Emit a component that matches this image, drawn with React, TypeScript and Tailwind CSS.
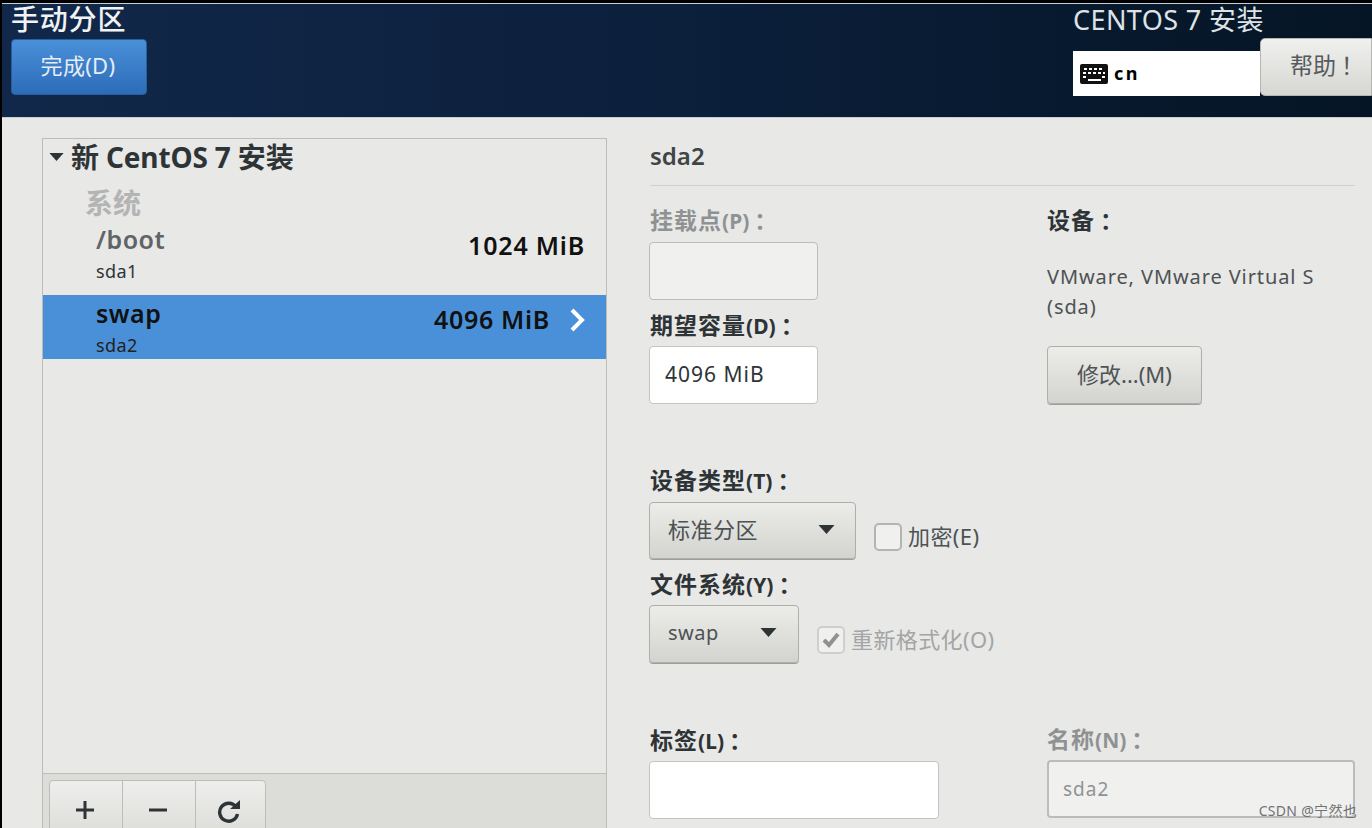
import React from "react";

const font = { fontFamily: '"Noto Sans","Noto Sans CJK SC",sans-serif' };

function Caret({ className }: { className: string }) {
  return (
    <svg viewBox="0 0 16 9" className={className}>
      <path d="M0 0H16L8 9Z" fill="currentColor" />
    </svg>
  );
}

function Label({ text, hot, muted }: { text: string; hot?: string; muted?: boolean }) {
  return (
    <div className={`h-[28px] text-[23px] leading-[28px] font-bold tracking-[1px] whitespace-nowrap ${muted ? "text-[#8f9293]" : "text-[#2e3436]"}`}>
      {text}
      {hot ? <span className="text-[21px] tracking-[0px]">({hot})</span> : null}
      <span className="ml-[5px]">：</span>
    </div>
  );
}

function Combo({ text, width, gap, size }: { text: string; width: string; gap: string; size: string }) {
  return (
    <div className={`${width} ${size} -ml-px shrink-0 rounded-[4px] border border-[#aeaeab] bg-gradient-to-b from-[#ecece9] to-[#d3d3d0] flex items-center pl-[18px] pb-[3px] text-[#4d5254] tracking-[0.5px] shadow-[0_1px_0_#9d9d9a]`}>
      <span className={`${gap} whitespace-nowrap`}>{text}</span>
      <Caret className="w-[17px] h-[9px] text-[#2e3436]" />
    </div>
  );
}

export default function App() {
  return (
    <div style={font} className="w-[1372px] h-[828px] overflow-hidden bg-black pt-[3px] pl-[2px] relative">
      <div className="w-full h-full bg-[#e8e8e7] flex flex-col">
        <div className="border-t border-[#c9ced3] h-[115px] shrink-0 border-b bg-gradient-to-r from-[#11284a] via-[#0c1f3b] to-[#051525] flex justify-between">
          <div className="pl-[9px]">
            <div className="text-[28px] leading-[30px] font-medium tracking-[0.8px] text-[#f0f2f3] whitespace-nowrap">手动分区</div>
            <div className="mt-[5px] w-[136px] h-[56px] rounded-[4px] border border-[#2a5f9e] bg-gradient-to-b from-[#4a90d9] to-[#2c6cb8] flex items-center justify-center text-[22px] tracking-[0.3px] text-[#e6edf5] pb-[4px] pr-[2px]">
              完成(D)
            </div>
          </div>
          <div className="w-[299px] shrink-0 flex flex-col">
            <div className="text-[27px] leading-[30px] mt-[1px] text-[#dfe3e6] whitespace-nowrap tracking-[0.4px]">CENTOS 7 安装</div>
            <div className="flex items-start mt-[3px]">
              <div className="w-[187px] h-[45px] mt-[13px] bg-white flex items-center pl-[7px] gap-[6px] text-[18px] font-bold text-black tracking-[2.5px]">
                <svg viewBox="0 0 28 20" className="w-[28px] h-[20px]">
                  <rect width="28" height="20" rx="2" fill="#111" />
                  <g fill="#fff">
                    <rect x="4" y="4" width="3" height="2" /><rect x="9" y="4" width="3" height="2" /><rect x="14" y="4" width="3" height="2" /><rect x="19" y="4" width="3" height="2" />
                    <rect x="3" y="8" width="3" height="2" /><rect x="8" y="8" width="3" height="2" /><rect x="13" y="8" width="3" height="2" /><rect x="18" y="8" width="3" height="2" /><rect x="23" y="8" width="2" height="2" />
                    <rect x="3" y="12" width="3" height="2" /><rect x="22" y="12" width="3" height="2" /><rect x="8" y="15" width="13" height="2" />
                  </g>
                </svg>
                <span>cn</span>
              </div>
              <div className="w-[112px] h-[58px] rounded-l-[5px] border border-[#b5b5b2] bg-gradient-to-b from-[#f0f0ee] to-[#d6d6d3] flex items-center justify-center pl-[22px] pb-[3px] text-[23px] text-[#555a5c] whitespace-nowrap">
                帮助<span className="ml-[5px]">！</span>
              </div>
            </div>
          </div>
        </div>

        <div className="flex-1 flex min-h-0">
          <div className="w-[565px] ml-[40px] mt-[20px] h-[691px] shrink-0 border border-[#bcbcb9] flex flex-col">
            <div className="flex-1 flex flex-col">
              <div className="flex items-center h-[36px] pl-[6px] gap-[7px] text-[28px] font-bold tracking-[-0.15px] text-[#2e3436] whitespace-nowrap">
                <Caret className="w-[15px] h-[8px] text-[#2e3436]" />
                <span>新 CentOS 7 安装</span>
              </div>
              <div className="pl-[42px] text-[28px] leading-[32px] mt-[12px] font-bold text-[#b3b4b3]">系统</div>
              <div className="flex justify-between h-[76px] pl-[53px] pr-[21px] pt-[5px]">
                <div>
                  <div className="text-[25px] leading-[30px] font-semibold tracking-[0.5px] text-[#5f6466]">/boot</div>
                  <div className="text-[18px] leading-[24px] mt-[5px] tracking-[0.4px] text-[#2e3436]">sda1</div>
                </div>
                <div className="text-[25px] leading-[30px] mt-[6px] font-semibold tracking-[0.8px] text-[#111]">1024 MiB</div>
              </div>
              <div className="flex justify-between h-[64px] bg-[#4a90d9] pl-[53px] pr-[21px] pt-[3px]">
                <div>
                  <div className="text-[25px] leading-[30px] font-semibold tracking-[0.5px] text-[#111]">swap</div>
                  <div className="text-[18px] leading-[24px] mt-[5px] tracking-[0.4px] text-[#222]">sda2</div>
                </div>
                <div className="flex items-start mt-[6px] gap-[19px]">
                  <span className="text-[25px] leading-[30px] font-semibold tracking-[0.7px] text-[#111]">4096 MiB</span>
                  <svg viewBox="0 0 16 24" className="w-[16px] h-[24px] mt-[4px]">
                    <path d="M3 2L13 12L3 22" fill="none" stroke="#fff" strokeWidth="4" />
                  </svg>
                </div>
              </div>
            </div>
            <div className="h-[55px] shrink-0 border-t border-[#bcbcb9] bg-[#dcdcd9] pl-[6px] pt-[6px]">
              <div className="flex w-[217px] h-[70px] rounded-t-[4px] border border-[#bcbcb9] bg-gradient-to-b from-[#eeeeec] to-[#d8d8d5] text-[#2e3436]">
                <div className="w-[73px] border-r border-[#bcbcb9] flex justify-center pt-[20px] pr-[2px]">
                  <svg viewBox="0 0 18 18" className="w-[18px] h-[18px]"><path d="M9 0V18M0 9H18" stroke="currentColor" strokeWidth="3" /></svg>
                </div>
                <div className="w-[73px] border-r border-[#bcbcb9] flex justify-center pt-[20px] pr-[2px]">
                  <svg viewBox="0 0 18 18" className="w-[18px] h-[18px]"><path d="M0 9H18" stroke="currentColor" strokeWidth="3" /></svg>
                </div>
                <div className="flex-1 flex justify-center pt-[19px] pr-[3px]">
                  <svg viewBox="0 0 24 24" className="w-[24px] h-[24px]">
                    <path d="M19 7A9 9 0 1 0 20.5 14" fill="none" stroke="currentColor" strokeWidth="3.4" />
                    <path d="M13 9H23V0Z" fill="currentColor" />
                  </svg>
                </div>
              </div>
            </div>
          </div>

          <div className="ml-[43px] w-[705px] shrink-0 flex flex-col">
            <div className="h-[68px] border-b border-[#cfcfcc] shrink-0 text-[24px] leading-[32px] pt-[22px] font-semibold text-[#3f4446]">
              <div className="h-[44px]">sda2</div>
            </div>
            <div className="flex">
              <div className="w-[397px] shrink-0">
                <div className="mt-[20px]"><Label text="挂载点" hot="P" muted /></div>
                <div className="mt-[8px] -ml-px w-[169px] h-[58px] rounded-[4px] border border-[#bcbcb9] bg-[#f0f0ef]" />
                <div className="mt-[11px]"><Label text="期望容量" hot="D" /></div>
                <div className="mt-[7px] -ml-px w-[169px] h-[58px] rounded-[4px] border border-[#c4c4c1] bg-white flex items-center pl-[15px] text-[21px] tracking-[1px] text-[#2e3436]">4096 MiB</div>
                <div className="mt-[62px]"><Label text="设备类型" hot="T" /></div>
                <div className="mt-[8px] flex items-start">
                  <Combo text="标准分区" width="w-[207px]" gap="mr-[60px]" size="h-[57px] text-[22px]" />
                  <div className="ml-[18px] mt-[18px] flex items-center gap-[6px] text-[22px] tracking-[0.4px] text-[#4d5254] whitespace-nowrap">
                    <div className="w-[28px] h-[28px] rounded-[5px] border-2 border-[#b4b4b1] bg-[#f0f0ee]" />
                    <span>加密(E)</span>
                  </div>
                </div>
                <div className="mt-[11px]"><Label text="文件系统" hot="Y" /></div>
                <div className="mt-[7px] flex items-start">
                  <Combo text="swap" width="w-[150px]" gap="mr-[41px]" size="h-[58px] text-[20px]" />
                  <div className="ml-[18px] mt-[18px] flex items-center gap-[6px] text-[22px] tracking-[0.4px] text-[#a3a5a5] whitespace-nowrap">
                    <div className="w-[28px] h-[28px] rounded-[5px] border-2 border-[#cfcfcc] bg-[#f0f0ee] flex items-center justify-center">
                      <svg viewBox="0 0 20 18" className="w-[20px] h-[18px]"><path d="M3 9L8 14L17 3" fill="none" stroke="#8f9293" strokeWidth="4" /></svg>
                    </div>
                    <span>重新格式化(O)</span>
                  </div>
                </div>
                <div className="mt-[63px]"><Label text="标签" hot="L" /></div>
                <div className="mt-[7px] -ml-px w-[290px] h-[58px] rounded-[4px] border border-[#c4c4c1] bg-white" />
              </div>
              <div className="flex-1">
                <div className="mt-[20px]"><Label text="设备" /></div>
                <div className="mt-[28px] text-[20px] leading-[30px] tracking-[0.9px] text-[#4d5254] whitespace-nowrap">VMware, VMware Virtual S<br />(sda)</div>
                <div className="mt-[24px] w-[155px] h-[58px] rounded-[4px] border border-[#aeaeab] bg-gradient-to-b from-[#ecece9] to-[#d3d3d0] flex items-center justify-center text-[22px] pb-[2px] text-[#4d5254] shadow-[0_1px_0_#9d9d9a]">修改...(M)</div>
                <div className="mt-[321px]"><Label text="名称" hot="N" muted /></div>
                <div className="mt-[7px] w-[308px] h-[58px] rounded-[4px] border-2 border-[#bcbcb9] bg-[#f0f0ef] flex items-center pl-[14px] text-[19px] tracking-[1px] text-[#8f9293]">sda2</div>
              </div>
            </div>
          </div>
        </div>
      </div>
      <div className="absolute right-[15px] bottom-[8px] text-[14px] leading-[18px] text-[#707274] tracking-[0.3px] whitespace-nowrap">CSDN @宁然也</div>
    </div>
  );
}
